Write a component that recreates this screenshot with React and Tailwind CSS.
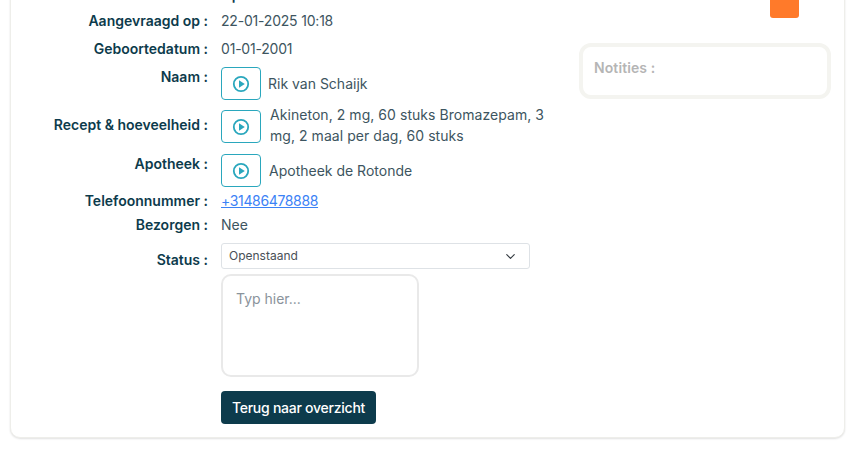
import { ChevronDown } from 'lucide-react'

function Row({ label, className = '', labelClass = '', children }) {
  return (
    <div className={`flex ${className}`}>
      <div className={`w-[197px] shrink-0 text-right text-[14px] font-semibold text-[#0d3b4c] ${labelClass}`}>{label} :</div>
      <div className="ml-[13px] min-w-0 flex-1 text-[14px] text-[#3d5560]">{children}</div>
    </div>
  )
}

function PlayButton({ className = '' }) {
  return (
    <button className={`flex h-[33px] w-[40px] shrink-0 items-center justify-center rounded-[4px] border border-[#2aa7bd] text-[#2aa7bd] ${className}`}>
      <svg width="18" height="18" viewBox="0 0 18 18" fill="none">
        <circle cx="9" cy="9" r="7.2" stroke="currentColor" strokeWidth="1.8" />
        <path d="M7 5.2 12.8 9 7 12.8Z" fill="currentColor" />
      </svg>
    </button>
  )
}

export default function App() {
  return (
    <div className="h-[450px] overflow-hidden bg-white font-['Inter',sans-serif]">
      <div className="mx-[10px] -mt-[46px] flex rounded-[10px] border border-[#eeeeea] bg-white pb-[13px] shadow-[0_1px_2px_rgba(0,0,0,0.12)]">
        <div className="w-[549px] shrink-0">
          <Row className="h-[50px] items-end" label="Klant">
            <span className="font-semibold leading-[20px] text-[#0d3b4c]">Open</span>
          </Row>
          <Row className="h-[28px] items-center pt-[2px]" label="Aangevraagd op">
            <span className="tracking-[-0.2px]">22-01-2025 10:18</span>
          </Row>
          <Row className="h-[28px] items-center pt-[2px]" label="Geboortedatum">
            <span className="tracking-[-0.2px]">01-01-2001</span>
          </Row>
          <Row className="mt-[6px] items-start" labelClass="-mt-[1px]" label="Naam">
            <div className="flex items-center">
              <PlayButton />
              <span className="ml-[7px]">Rik van Schaijk</span>
            </div>
          </Row>
          <Row className="mt-[4px] items-start" labelClass="pt-[10px]" label="Recept &amp; hoeveelheid">
            <div className="flex items-start">
              <PlayButton className="mt-[6px]" />
              <span className="ml-[9px] leading-[21px] tracking-[0.05px]">Akineton, 2 mg, 60 stuks Bromazepam, 3 mg, 2 maal per dag, 60 stuks</span>
            </div>
          </Row>
          <Row className="mt-[8px] items-start" labelClass="-mt-[1px]" label="Apotheek">
            <div className="flex items-center">
              <PlayButton />
              <span className="ml-[8px]">Apotheek de Rotonde</span>
            </div>
          </Row>
          <Row className="mt-[1px] h-[24px] items-center" label="Telefoonnummer">
            <a href="#" className="tracking-[-0.35px] text-[#3b82f6] underline">+31486478888</a>
          </Row>
          <Row className="h-[24px] items-center" label="Bezorgen">Nee</Row>
          <Row className="mt-[7px] items-start" labelClass="pt-[6px] h-[26px]" label="Status">
            <div className="flex h-[26px] w-[309px] items-center justify-between rounded-[3px] border border-[#dee2e6] pl-[7px] pr-[11px] text-[12px] text-[#495057]">
              Openstaand
              <ChevronDown size={15} strokeWidth={1.8} className="text-[#343a40]" />
            </div>
          </Row>
          <div className="ml-[210px] mt-[5px]">
            <textarea
              placeholder="Typ hier..."
              className="block h-[103px] w-[198px] resize-none rounded-[10px] border-2 border-[#e9e9e9] px-[13px] py-[12px] text-[14px] outline-none placeholder:text-[#8a939b]"
            />
            <button className="mt-[14px] h-[33px] w-[155px] rounded-[4px] bg-[#0d3b4c] text-[14px] font-medium tracking-[-0.25px] text-white">
              Terug naar overzicht
            </button>
          </div>
        </div>
        <div className="ml-[19px] w-[252px] shrink-0">
          <div className="ml-[191px] mt-[8px] h-[55px] w-[29px] rounded-b-[3px] bg-[#ff7a2a]" />
          <div className="mt-[25px] h-[56px] rounded-[12px] border-[4px] border-[#f4f4f0] px-[11px] py-[10px] text-[14px] font-semibold tracking-[0.1px] text-[#b5b5b5]">
            Notities :
          </div>
        </div>
      </div>
    </div>
  )
}
